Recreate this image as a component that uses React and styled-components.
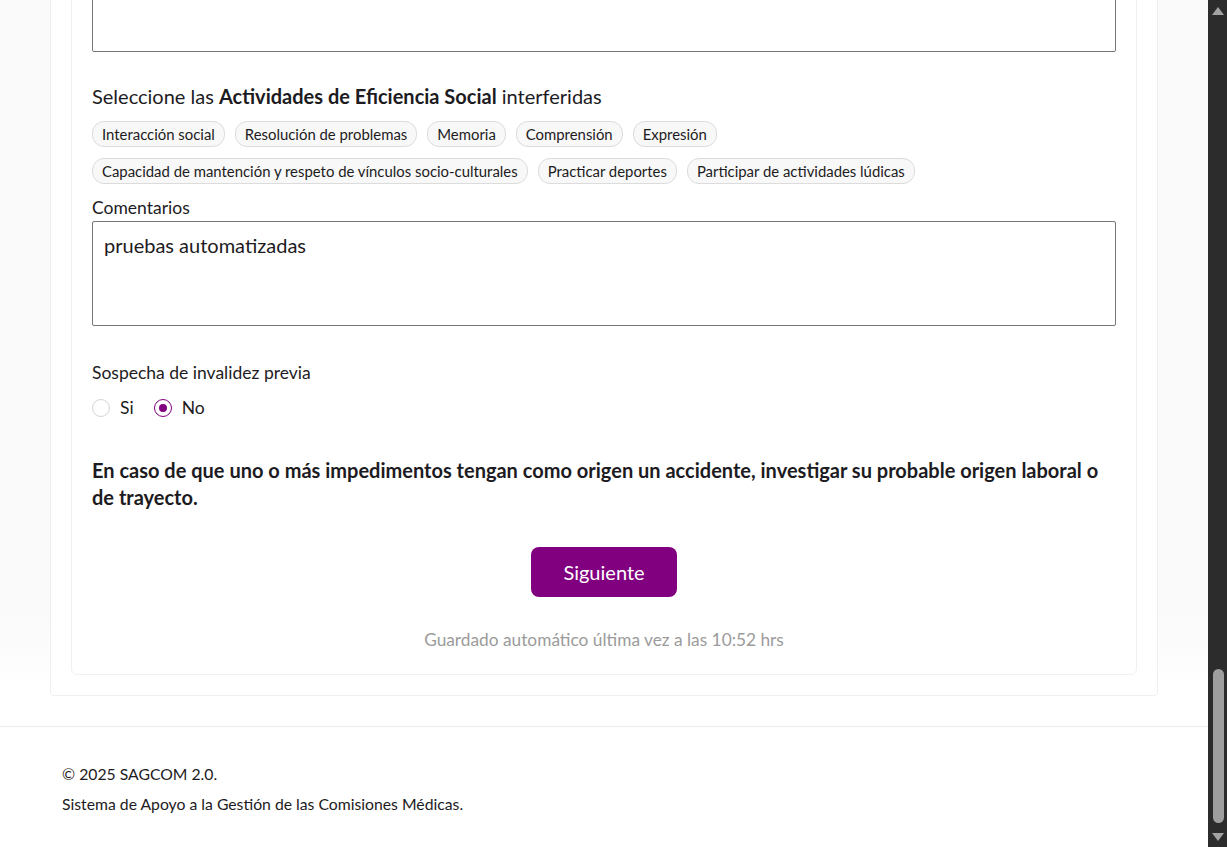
import React from "react";
import styled, { createGlobalStyle } from "styled-components";

const GlobalStyle = createGlobalStyle`
  html, body {
    margin: 0;
    padding: 0;
    height: 100%;
    overflow: hidden;
  }
  body {
    font-family: Lato, "Noto Sans", sans-serif;
    color: #1d1b22;
  }
  * { box-sizing: border-box; }
`;

const Frame = styled.div`
  display: flex;
  height: 100vh;
  background: #fff;
`;

const Viewport = styled.div`
  flex: 1;
  min-width: 0;
  display: flex;
  flex-direction: column;
  justify-content: flex-end;
  overflow: hidden;

  & > * {
    flex-shrink: 0;
  }
`;

const Scrollbar = styled.div`
  width: 19px;
  display: flex;
  flex-direction: column;
  background: #2c2c2c;
`;

const ArrowButton = styled.div`
  height: ${(p) => p.$h}px;
  display: flex;
  justify-content: center;
  align-items: flex-start;
  padding-top: ${(p) => p.$pad}px;
  padding-left: 1px;
`;

const Track = styled.div`
  flex: 1;
  display: flex;
  flex-direction: column;
  justify-content: flex-end;
  align-items: center;
  padding: 0 0 7px 1px;
`;

const Thumb = styled.div`
  width: 11px;
  height: 154px;
  border-radius: 6px;
  background: #9f9f9f;
`;

const Main = styled.main`
  padding: 24px 50px 30px;
  background: linear-gradient(
    to bottom,
    #fafafa 0,
    #fafafa calc(100% - 110px),
    #ffffff calc(100% - 35px)
  );
`;

const Panel = styled.div`
  background: #fff;
  border: 1px solid #efefef;
  border-radius: 4px;
  padding: 20px;
`;

const Card = styled.div`
  background: #fff;
  border: 1px solid #f0f0f0;
  border-radius: 6px;
  padding: 20px 20px 24px;
`;

const Section = styled.section`
  margin-top: 32px;
`;

const Heading = styled.p`
  margin: 0 0 13px;
  font-size: 20px;
  line-height: 24px;

  b {
    font-weight: 700;
  }
`;

const ChipList = styled.div`
  display: flex;
  flex-wrap: wrap;
  gap: 11px 10px;
`;

const Chip = styled.span`
  display: inline-flex;
  align-items: center;
  height: 26px;
  padding: 0 9px;
  border: 1px solid #dcdcdc;
  border-radius: 12px;
  background: #f8f8f8;
  font-size: 14.9px;
  color: #1d1b22;
  cursor: pointer;
`;

const Label = styled.label`
  display: block;
  margin: ${(p) => p.$top || 14}px 0 3px;
  font-size: 17.5px;
  line-height: 20px;
`;

const TextArea = styled.textarea`
  display: block;
  width: 100%;
  height: 105px;
  padding: 11px;
  border: 1px solid #767676;
  border-radius: 2px;
  resize: none;
  font-family: Lato, "Noto Sans", sans-serif;
  font-size: 20px;
  color: #1d1b22;
  background: #fff;
`;

const RadioRow = styled.div`
  display: flex;
  gap: 20px;
  margin-top: 15px;
`;

const RadioOption = styled.label`
  display: flex;
  align-items: center;
  gap: 10px;
  font-size: 17.5px;
  line-height: 20px;
  cursor: pointer;
`;

const RadioDot = styled.span`
  width: 18px;
  height: 18px;
  border-radius: 50%;
  border: 1px solid ${(p) => (p.$checked ? "#800080" : "#d4d4d4")};
  display: flex;
  align-items: center;
  justify-content: center;
  background: #fff;

  &::after {
    content: "";
    width: 8px;
    height: 8px;
    border-radius: 50%;
    background: ${(p) => (p.$checked ? "#800080" : "transparent")};
  }
`;

const Notice = styled.p`
  margin: 39px 0 0;
  font-size: 20px;
  line-height: 27px;
  font-weight: 700;
`;

const Actions = styled.div`
  display: flex;
  justify-content: center;
  margin-top: 36px;
`;

const Button = styled.button`
  width: 146px;
  height: 50px;
  border: none;
  border-radius: 8px;
  background: #800080;
  color: #fff;
  font-family: Lato, "Noto Sans", sans-serif;
  font-size: 20px;
  cursor: pointer;
`;

const Saved = styled.p`
  margin: 33px 0 0;
  text-align: center;
  font-size: 17.3px;
  line-height: 20px;
  color: #9b9b9b;
`;

const Footer = styled.footer`
  border-top: 1px solid #ececec;
  background: #fff;
  padding: 38px 62px 34px;
  font-size: 15.75px;
  line-height: 18px;

  p {
    margin: 0;
  }
  p + p {
    margin-top: 12px;
  }
`;

const socialChips = [
  "Interacción social",
  "Resolución de problemas",
  "Memoria",
  "Comprensión",
  "Expresión",
  "Capacidad de mantención y respeto de vínculos socio-culturales",
  "Practicar deportes",
  "Participar de actividades lúdicas",
];

const Arrow = ({ up }) => (
  <svg width="12" height="8" viewBox="0 0 12 8">
    <polygon points={up ? "0,8 6,0 12,8" : "0,0 6,8 12,0"} fill="#a3a3a3" />
  </svg>
);

export default function App() {
  return (
    <>
      <GlobalStyle />
      <Frame>
        <Viewport>
          <Main>
            <Panel>
              <Card>
                <TextArea aria-label="Comentarios anteriores" />

                <Section>
                  <Heading>
                    Seleccione las <b>Actividades de Eficiencia Social</b>{" "}
                    interferidas
                  </Heading>
                  <ChipList>
                    {socialChips.map((c) => (
                      <Chip key={c}>{c}</Chip>
                    ))}
                  </ChipList>
                  <Label>Comentarios</Label>
                  <TextArea defaultValue="pruebas automatizadas" />
                </Section>

                <Label $top={37}>Sospecha de invalidez previa</Label>
                <RadioRow>
                  <RadioOption>
                    <RadioDot />
                    Si
                  </RadioOption>
                  <RadioOption>
                    <RadioDot $checked />
                    No
                  </RadioOption>
                </RadioRow>

                <Notice>
                  En caso de que uno o más impedimentos tengan como origen un
                  accidente, investigar su probable origen laboral o de
                  trayecto.
                </Notice>

                <Actions>
                  <Button type="button">Siguiente</Button>
                </Actions>

                <Saved>Guardado automático última vez a las 10:52 hrs</Saved>
              </Card>
            </Panel>
          </Main>
          <Footer>
            <p>© 2025 SAGCOM 2.0.</p>
            <p>Sistema de Apoyo a la Gestión de las Comisiones Médicas.</p>
          </Footer>
        </Viewport>
        <Scrollbar>
          <ArrowButton $h={19} $pad={7}>
            <Arrow up />
          </ArrowButton>
          <Track>
            <Thumb />
          </Track>
          <ArrowButton $h={17} $pad={3}>
            <Arrow />
          </ArrowButton>
        </Scrollbar>
      </Frame>
    </>
  );
}
